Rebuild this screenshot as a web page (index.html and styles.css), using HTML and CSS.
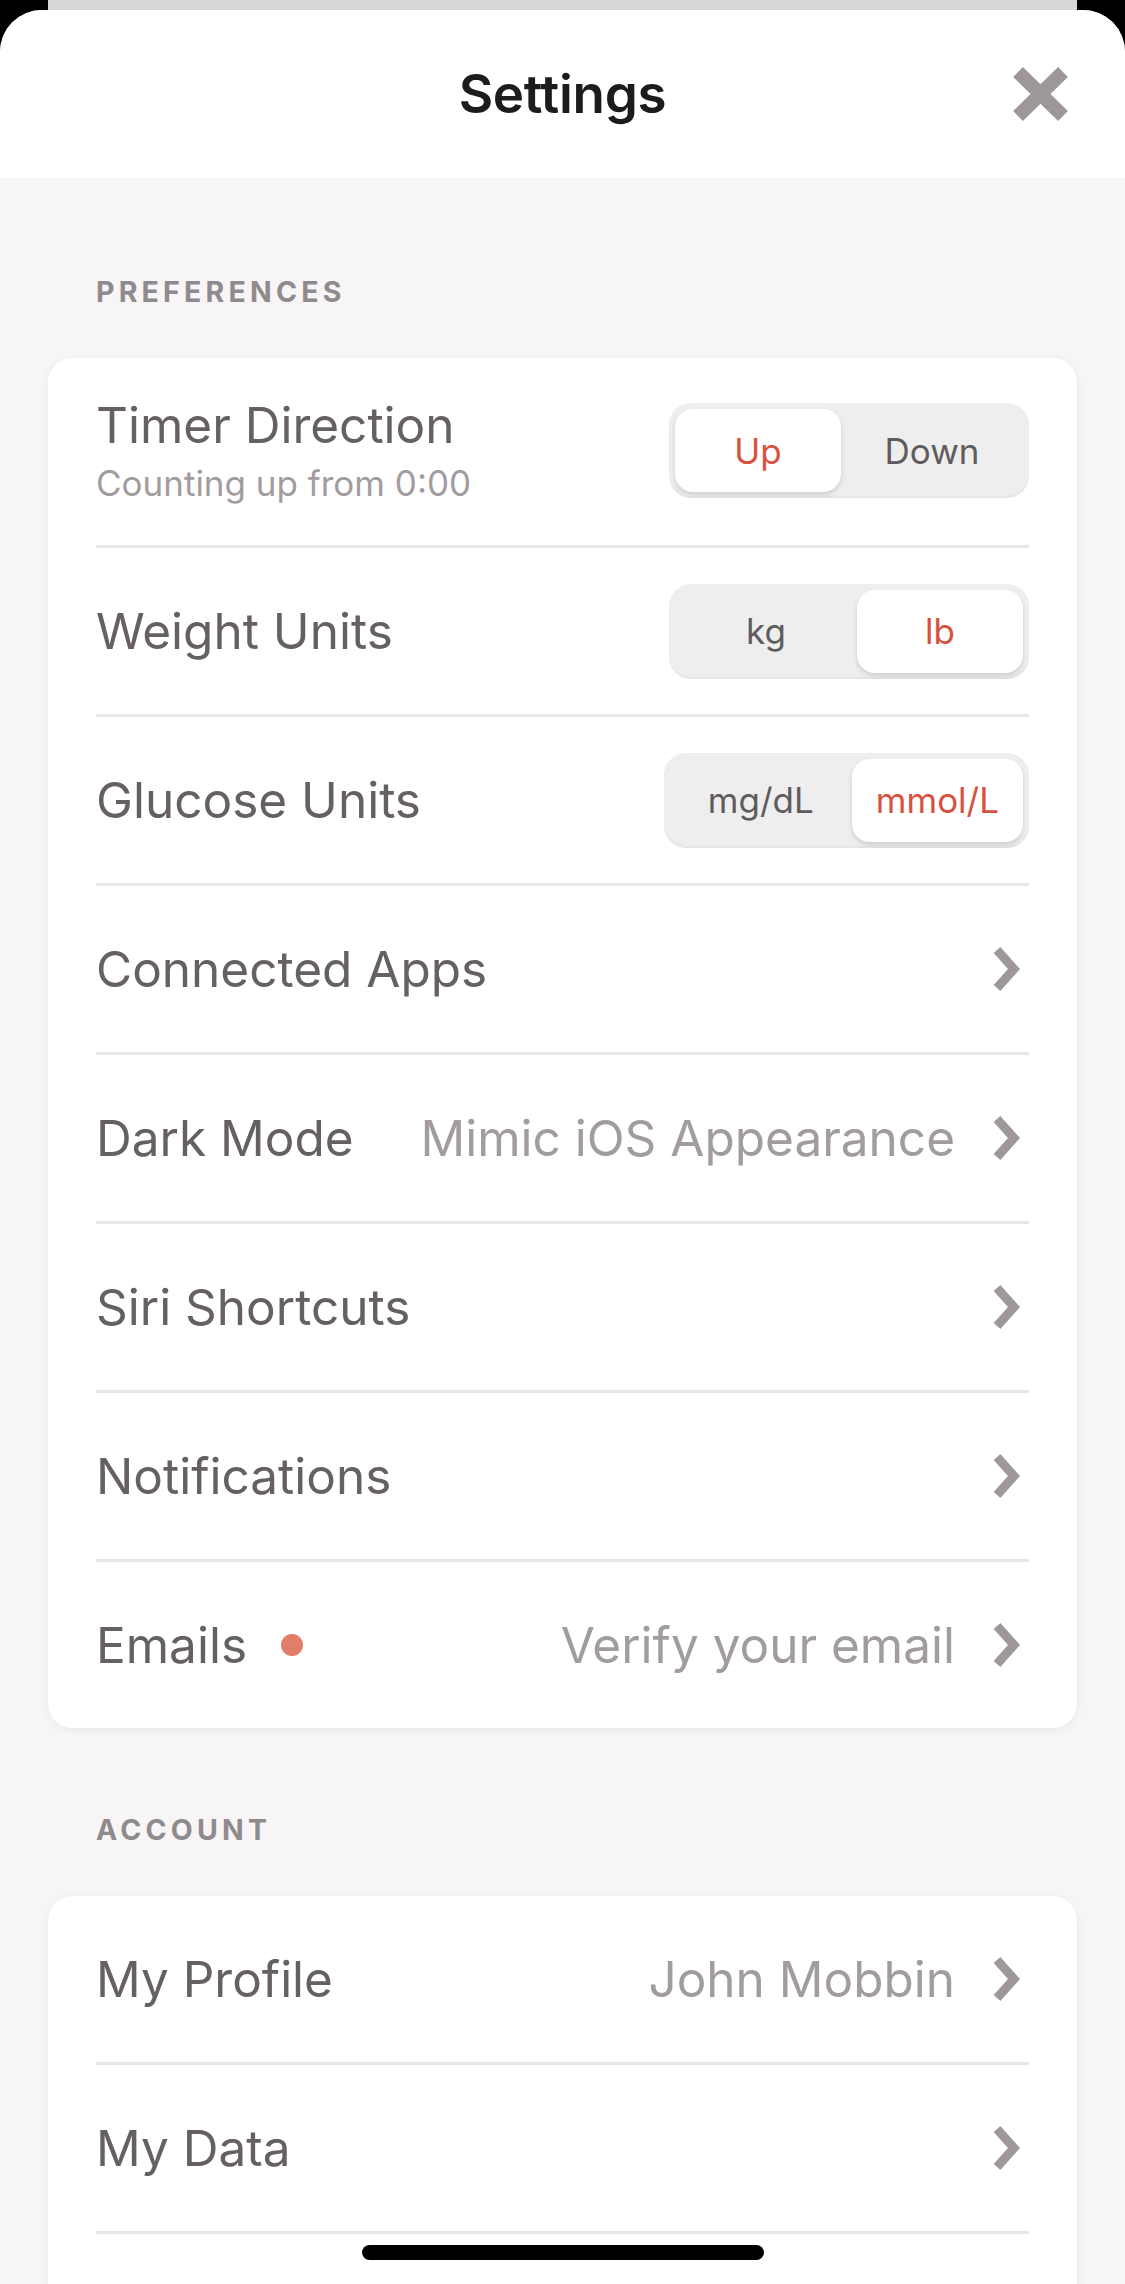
FILE: index.html
```html
<!DOCTYPE html>
<html lang="en">
<head>
    <meta charset="UTF-8">
    <meta name="viewport" content="width=device-width, initial-scale=1.0">
    <title>Settings</title>
    <link rel="stylesheet" href="styles.css">
</head>
<body>
    <div class="screen">
        <div class="sheet-behind"></div>
        <div class="sheet">
            <header class="nav">
                <span></span>
                <h1 class="nav-title">Settings</h1>
                <button class="close" aria-label="Close">
                    <svg width="55" height="54" viewBox="0 0 55 54">
                        <path d="M5 5 L50 49 M50 5 L5 49" stroke="#9d979a" stroke-width="14" fill="none"/>
                    </svg>
                </button>
            </header>

            <main class="content">
                <section class="group">
                    <h2 class="group-title">Preferences</h2>
                    <div class="card">
                        <div class="row row-tall">
                            <div class="row-text">
                                <div class="row-label">Timer Direction</div>
                                <div class="row-sub">Counting up from 0:00</div>
                            </div>
                            <div class="segmented">
                                <span class="segment active">Up</span>
                                <span class="segment">Down</span>
                            </div>
                        </div>
                        <div class="row">
                            <span class="row-label">Weight Units</span>
                            <div class="segmented">
                                <span class="segment">kg</span>
                                <span class="segment active">lb</span>
                            </div>
                        </div>
                        <div class="row">
                            <span class="row-label">Glucose Units</span>
                            <div class="segmented">
                                <span class="segment">mg/dL</span>
                                <span class="segment active">mmol/L</span>
                            </div>
                        </div>
                        <div class="row">
                            <span class="row-label">Connected Apps</span>
                            <svg class="chevron" width="27" height="44" viewBox="0 0 27 44"><path d="M4 3 L21 22 L4 41" /></svg>
                        </div>
                        <div class="row">
                            <span class="row-label">Dark Mode</span>
                            <span class="row-value">Mimic iOS Appearance</span>
                            <svg class="chevron" width="27" height="44" viewBox="0 0 27 44"><path d="M4 3 L21 22 L4 41" /></svg>
                        </div>
                        <div class="row">
                            <span class="row-label">Siri Shortcuts</span>
                            <svg class="chevron" width="27" height="44" viewBox="0 0 27 44"><path d="M4 3 L21 22 L4 41" /></svg>
                        </div>
                        <div class="row">
                            <span class="row-label">Notifications</span>
                            <svg class="chevron" width="27" height="44" viewBox="0 0 27 44"><path d="M4 3 L21 22 L4 41" /></svg>
                        </div>
                        <div class="row">
                            <span class="row-label">Emails</span>
                            <span class="dot"></span>
                            <span class="row-value">Verify your email</span>
                            <svg class="chevron" width="27" height="44" viewBox="0 0 27 44"><path d="M4 3 L21 22 L4 41" /></svg>
                        </div>
                    </div>
                </section>

                <section class="group">
                    <h2 class="group-title">Account</h2>
                    <div class="card">
                        <div class="row">
                            <span class="row-label">My Profile</span>
                            <span class="row-value">John Mobbin</span>
                            <svg class="chevron" width="27" height="44" viewBox="0 0 27 44"><path d="M4 3 L21 22 L4 41" /></svg>
                        </div>
                        <div class="row">
                            <span class="row-label">My Data</span>
                            <svg class="chevron" width="27" height="44" viewBox="0 0 27 44"><path d="M4 3 L21 22 L4 41" /></svg>
                        </div>
                        <div class="row"></div>
                    </div>
                </section>
            </main>

            <div class="home-indicator"></div>
        </div>
    </div>
</body>
</html>
```

FILE: styles.css
```css
body {
    margin: 0;
    padding: 0;
    font-family: Inter, "Noto Sans", sans-serif;
    background-color: #000;
}

.screen {
    width: 1125px;
    height: 2284px;
    background-color: #000;
    overflow: hidden;
    display: flex;
    flex-direction: column;
}

.sheet-behind {
    height: 10px;
    margin: 0 48px;
    background-color: #d8d7d8;
    flex: none;
}

.sheet {
    position: relative;
    flex: 1;
    background-color: #f7f5f6;
    border-radius: 42px 42px 0 0;
    overflow: hidden;
}

.nav {
    height: 168px;
    background-color: #fff;
    display: grid;
    grid-template-columns: 1fr auto 1fr;
    align-items: center;
}

.nav-title {
    margin: 0;
    font-size: 53px;
    font-weight: 600;
    color: #1d1b1c;
    letter-spacing: -0.3px;
}

.close {
    justify-self: end;
    margin-right: 57px;
    padding: 0;
    border: none;
    background: none;
    display: flex;
}

.content {
    padding: 97px 48px 0;
}

.group {
    margin-bottom: 85px;
}

.group-title {
    margin: 0 48px 49px;
    font-size: 28.5px;
    line-height: 34px;
    font-weight: 700;
    letter-spacing: 4.2px;
    text-transform: uppercase;
    color: #8f8a8c;
}

.card {
    background-color: #fff;
    border-radius: 24px;
    padding: 0 48px;
    box-shadow: 0 2px 8px rgba(0, 0, 0, 0.06);
}

.row {
    min-height: 166px;
    display: flex;
    align-items: center;
    border-bottom: 3px solid #e8e7e8;
}

.row:last-child {
    border-bottom: none;
}

.row-tall {
    padding: 38px 0 40px;
    box-sizing: border-box;
    min-height: 190px;
}

.row-label {
    font-size: 49.5px;
    line-height: 58px;
    color: #666062;
}

.row-sub {
    margin-top: 7px;
    font-size: 35px;
    line-height: 44px;
    color: #a29c9e;
}

.row-value {
    margin-left: auto;
    margin-right: 38px;
    font-size: 49.5px;
    line-height: 58px;
    color: #a29c9e;
}

.chevron {
    margin-left: auto;
    margin-right: 9px;
    flex: none;
}

.row-value + .chevron {
    margin-left: 0;
}

.chevron path {
    fill: none;
    stroke: #9e989b;
    stroke-width: 9;
}

.dot {
    width: 22px;
    height: 22px;
    margin-left: 34px;
    border-radius: 50%;
    background-color: #e27d67;
}

.segmented {
    margin-left: auto;
    display: flex;
    padding: 6px;
    height: 83px;
    background-color: #efeeef;
    border-radius: 22px;
    box-shadow: inset 0 -2px 2px rgba(0, 0, 0, 0.04);
}

.segment {
    min-width: 182px;
    padding: 0 38px;
    box-sizing: border-box;
    display: flex;
    align-items: center;
    justify-content: center;
    font-size: 35px;
    color: #605b5d;
    border-radius: 18px;
}

.segment.active {
    min-width: 166px;
    padding: 0 24px;
    background-color: #fff;
    color: #d8513f;
    box-shadow: 0 3px 5px rgba(0, 0, 0, 0.13);
}

.home-indicator {
    position: absolute;
    left: 362px;
    bottom: 24px;
    width: 402px;
    height: 15px;
    border-radius: 8px;
    background-color: #000;
}
```
